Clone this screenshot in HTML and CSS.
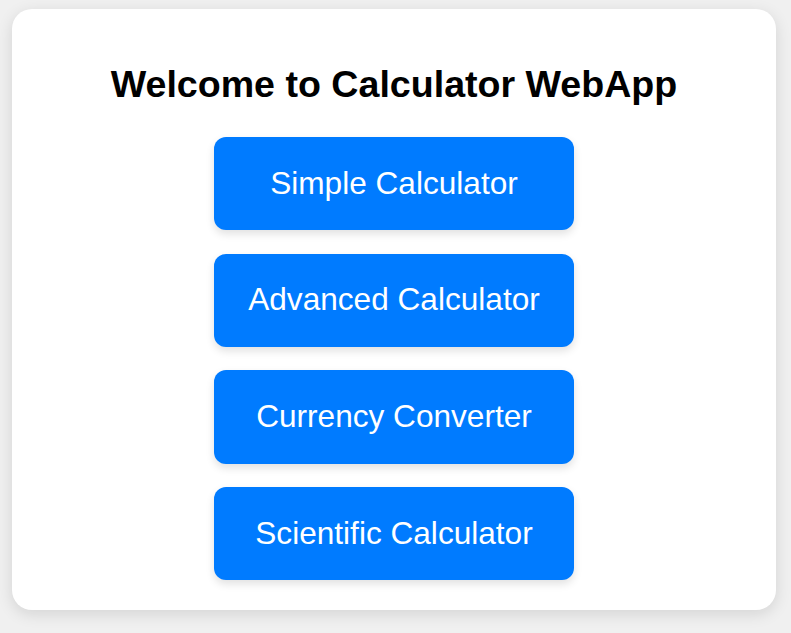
FILE: index.html
```html
<!DOCTYPE html>
<html>
<head>
<meta charset="utf-8">
<link rel="stylesheet" href="styles.css">
</head>
<body>
<div class="card">
  <h1 class="title">Welcome to Calculator WebApp</h1>
  <div class="buttons">
    <button class="btn">Simple Calculator</button>
    <button class="btn">Advanced Calculator</button>
    <button class="btn">Currency Converter</button>
    <button class="btn">Scientific Calculator</button>
  </div>
</div>
</body>
</html>
```
FILE: styles.css
```css
html, body {
  margin: 0;
  height: 100%;
}
body {
  background: #f0f0f0;
  font-family: "Liberation Sans", Arial, sans-serif;
  padding: 9px 15px 0 12px;
  box-sizing: border-box;
}
.card {
  background: #fff;
  border-radius: 20px;
  box-shadow: 0 4px 16px rgba(0,0,0,0.12);
  height: 601px;
  box-sizing: border-box;
  padding: 54px 20px 30px;
  display: flex;
  flex-direction: column;
  align-items: center;
}
.title {
  margin: 0 0 31px;
  font-size: 37.6px;
  font-weight: bold;
  color: #000;
  line-height: normal;
}
.buttons {
  display: flex;
  flex-direction: column;
  gap: 23.33px;
}
.btn {
  width: 360px;
  height: 93.33px;
  border: none;
  border-radius: 12px;
  background: #007bff;
  color: #fff;
  font-family: "Liberation Sans", Arial, sans-serif;
  font-size: 31.6px;
  box-shadow: 0 4px 8px rgba(0,0,0,0.12);
  padding: 0 0 1px;
}
```
